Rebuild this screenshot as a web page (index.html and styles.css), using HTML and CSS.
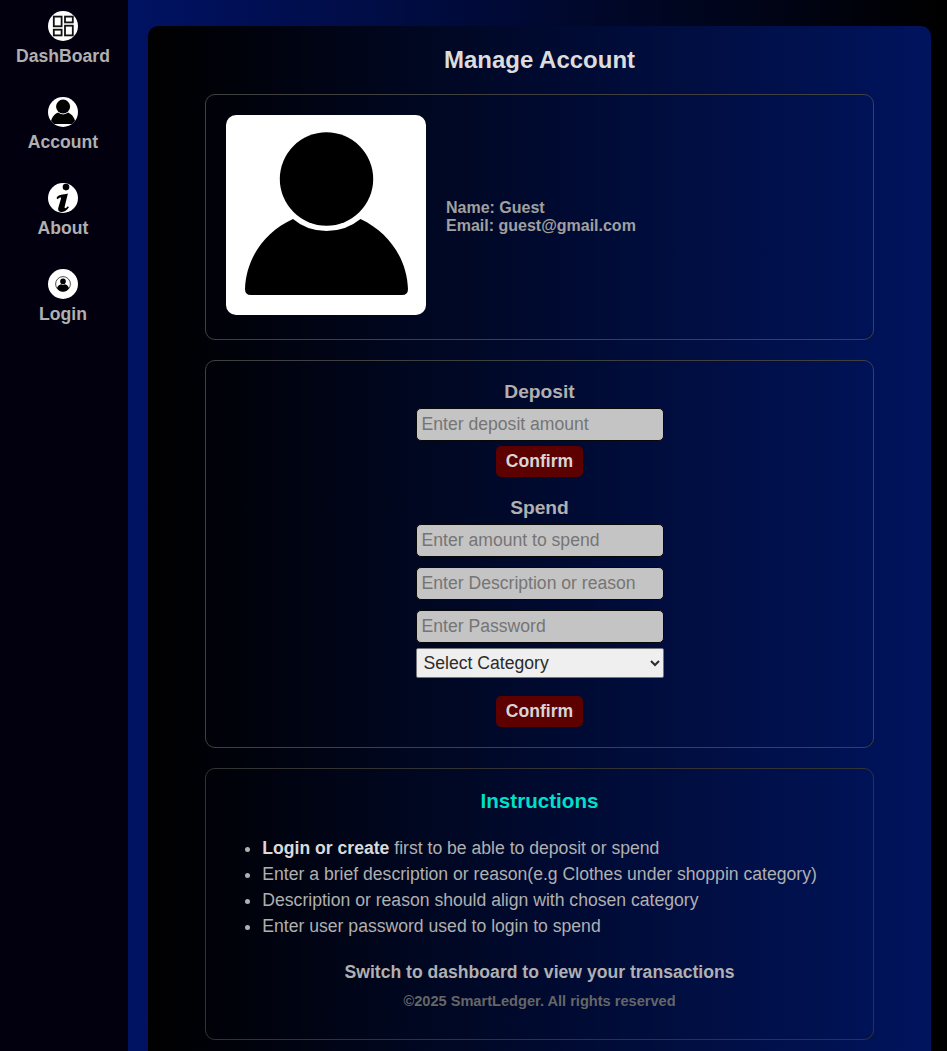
FILE: index.html
```html
<!DOCTYPE html>
<html lang="en">
<head>
<meta charset="utf-8">
<title>SmartLedger - Account</title>
<link rel="stylesheet" href="styles.css">
</head>
<body>
<nav class="sidebar">
  <a class="nav-item">
    <svg class="nav-icon" viewBox="0 0 30 30"><circle cx="15" cy="15" r="15" fill="#fff"/><g fill="#fff" stroke="#111" stroke-width="1.800"><rect x="5.800" y="5.600" width="7.800" height="9.700"/><rect x="17" y="5.600" width="7.800" height="5.800"/><rect x="5.800" y="18.700" width="7.800" height="5.700"/><rect x="17" y="14.700" width="7.800" height="9.700"/></g></svg>
    <span>DashBoard</span>
  </a>
  <a class="nav-item">
    <svg class="nav-icon" viewBox="0 0 200 200"><defs><clipPath id="round"><circle cx="100" cy="100" r="100"/></clipPath></defs><g clip-path="url(#round)"><path fill="#fff" d="M0 0h200v200H0z"/><circle cx="100.500" cy="64" r="46.700"/><path d="M67 104Q81 116 100.500 116Q120 116 134.500 104C164 118 181 145 182 174Q182 180 176 180H25Q19 180 19 174C20 144 38 117 67 104Z"/></g></svg>
    <span>Account</span>
  </a>
  <a class="nav-item">
    <svg class="nav-icon" viewBox="0 0 30 30"><circle cx="15" cy="15" r="15" fill="#fff"/><circle cx="18" cy="4.100" r="3.300"/><path d="M8.500 15C10.500 11.300 15 11.900 19.900 10.600L16.700 23.600C16.200 26.200 17.900 25.600 19.900 23.300L20.900 24.200C18.100 28.500 14.700 29.300 12 28.700C9.800 28.100 9.900 26 10.500 24L12.900 16C13.400 13.900 12 14.200 9.500 16.200Z"/></svg>
    <span>About</span>
  </a>
  <a class="nav-item">
    <svg class="nav-icon" viewBox="0 0 30 30"><circle cx="15" cy="15" r="15" fill="#fff"/><circle cx="15" cy="15" r="7.400" fill="none" stroke="#222" stroke-width=".8"/><circle cx="15" cy="12.400" r="2.800"/><path d="M9 19.300C9.600 16.800 11.500 15.600 13.100 15.300Q15 16.700 16.900 15.300C18.700 15.600 20.400 16.900 21 19.300Q18.700 22.600 15 22.600Q11.300 22.600 9 19.300Z"/></svg>
    <span>Login</span>
  </a>
</nav>
<main class="content">
  <div class="panel">
    <h1 class="title">Manage Account</h1>
    <section class="card profile">
      <svg class="avatar" viewBox="0 0 200 200"><path fill="#fff" d="M0 0h200v200H0z"/><circle cx="100.500" cy="64" r="46.700"/><path d="M67 104Q81 116 100.500 116Q120 116 134.500 104C164 118 181 145 182 174Q182 180 176 180H25Q19 180 19 174C20 144 38 117 67 104Z"/></svg>
      <div class="details">
        <div>Name: Guest</div>
        <div>Email: guest@gmail.com</div>
      </div>
    </section>
    <section class="card forms">
      <form class="form deposit">
        <h2 class="form-title">Deposit</h2>
        <input class="field" type="text" placeholder="Enter deposit amount">
        <button class="confirm" type="button">Confirm</button>
      </form>
      <form class="form spend">
        <h2 class="form-title">Spend</h2>
        <input class="field" type="text" placeholder="Enter amount to spend">
        <input class="field" type="text" placeholder="Enter Description or reason">
        <input class="field" type="password" placeholder="Enter Password">
        <select class="category"><option>Select Category</option></select>
        <button class="confirm" type="button">Confirm</button>
      </form>
    </section>
    <section class="card info">
      <h2 class="info-title">Instructions</h2>
      <ul class="steps">
        <li><strong>Login or create</strong> first to be able to deposit or spend</li>
        <li>Enter a brief description or reason(e.g Clothes under shoppin category)</li>
        <li>Description or reason should align with chosen category</li>
        <li>Enter user password used to login to spend</li>
      </ul>
      <p class="hint">Switch to dashboard to view your transactions</p>
      <p class="copyright">©2025 SmartLedger. All rights reserved</p>
    </section>
  </div>
</main>
</body>
</html>
```
FILE: styles.css
```css
* {
  box-sizing: border-box;
}

body {
  margin: 0;
  height: 1051px;
  display: flex;
  overflow: hidden;
  font-family: "Liberation Sans", Arial, sans-serif;
  font-size: 17.6px;
  color: #b0b0b0;
  background: #000;
}

.sidebar {
  width: 128px;
  flex: none;
  padding: 11px 2px 0 0;
  display: flex;
  flex-direction: column;
  gap: 30px;
  background: #02000f;
}

.nav-item {
  height: 56px;
  display: flex;
  flex-direction: column;
  align-items: center;
  gap: 5px;
  font-weight: bold;
  line-height: 20px;
}

.nav-icon {
  width: 30px;
  height: 30px;
  flex: none;
}

.content {
  flex: 1;
  padding: 26px 16px 0 20px;
  background: linear-gradient(90deg, #001263, #000);
}

.panel {
  height: 1060px;
  padding: 20px 57px;
  border-radius: 10px;
  background: linear-gradient(90deg, #000, #00145e);
}

.title {
  margin: 0 0 20px;
  font-size: 24px;
  line-height: 28px;
  text-align: center;
  color: #dcdcdc;
}

.card {
  margin-bottom: 20px;
  border: 1px solid #404040;
  border-radius: 10px;
}

.profile {
  height: 246px;
  padding: 20px;
  display: flex;
  gap: 20px;
}

.avatar {
  width: 200px;
  height: 200px;
  border-radius: 10px;
}

.details {
  align-self: center;
  font-size: 16px;
  font-weight: bold;
  line-height: 18px;
  color: #a0a0a0;
}

.forms {
  height: 388px;
  padding-top: 20px;
}

.form {
  display: flex;
  flex-direction: column;
  align-items: center;
}

.form-title {
  margin: 0 0 5px;
  font-size: 19.2px;
  line-height: 22px;
}

.field {
  width: 248px;
  height: 33px;
  padding: 0 5px;
  border: 1px solid #080808;
  border-radius: 5px;
  font: inherit;
  background: #c4c4c4;
}

.field::placeholder {
  color: #757575;
}

.field + .field {
  margin-top: 10px;
}

.confirm {
  height: 31px;
  margin-top: 5px;
  padding: 0 10px;
  border: 0;
  border-radius: 5px;
  font: inherit;
  font-weight: bold;
  color: #d6d6d6;
  background: #5c0000;
}

.spend {
  margin-top: 20px;
}

.category {
  width: 248px;
  height: 30px;
  margin: 5px 0 13px;
  padding: 0 2px 0 3px;
  border: 1px solid #767676;
  border-radius: 2px;
  font: inherit;
  color: #2b2b2b;
  background: #efefef;
}

.info {
  height: 272px;
  padding-top: 20px;
  border-color: #333;
}

.info-title {
  margin: 0;
  font-size: 20.6px;
  line-height: 24px;
  text-align: center;
  color: #00dfc8;
}

.steps {
  margin: 22px 0 0;
  padding-left: 56.3px;
  line-height: 26px;
}

.steps strong {
  color: #dadada;
}

.hint,
.copyright {
  margin: 0;
  text-align: center;
  font-weight: bold;
}

.hint {
  margin-top: 23px;
  line-height: 20px;
}

.copyright {
  margin-top: 11px;
  font-size: 14.6px;
  line-height: 16px;
  color: #666;
}
```
